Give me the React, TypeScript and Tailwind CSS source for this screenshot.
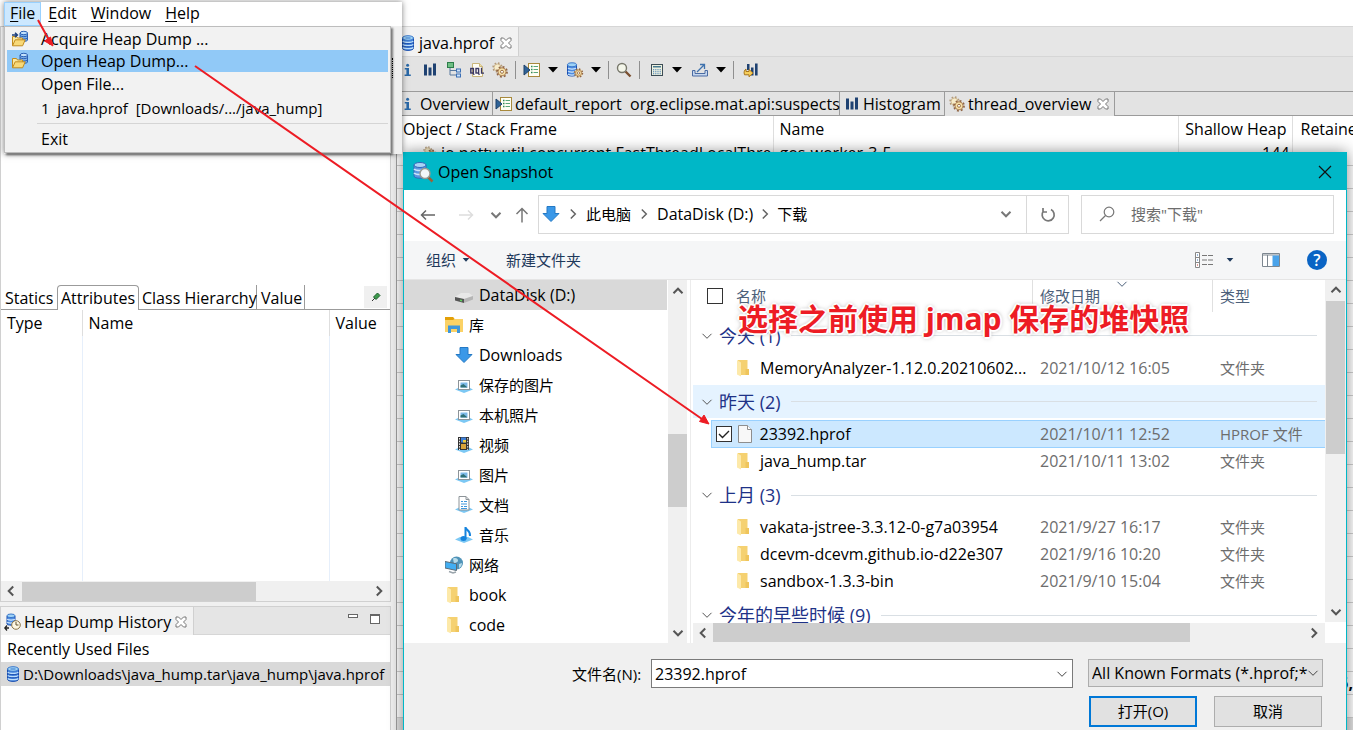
import * as React from "react";

type IconProps = { className?: string };

function Database({ className = "h-4 w-4" }: IconProps) {
  return (
    <svg viewBox="0 0 16 16" className={className} aria-hidden="true">
      <path d="M2.5 3v10.2c0 1.2 2.4 2.2 5.5 2.2s5.5-1 5.5-2.2V3z" fill="#3f7fdc" stroke="#1b4fb0" />
      <path d="M2.8 6.2c1 1.6 9.4 1.6 10.4 0M2.8 9.4c1 1.6 9.4 1.6 10.4 0M2.8 12.4c1 1.6 9.4 1.6 10.4 0" fill="none" stroke="#bfe0fb" strokeWidth="1.3" />
      <path d="M2.8 7.4c1 1.6 9.4 1.6 10.4 0M2.8 10.6c1 1.6 9.4 1.6 10.4 0" fill="none" stroke="#1747a8" strokeWidth="0.8" />
      <ellipse cx="8" cy="3" rx="5.5" ry="2.3" fill="#9fd2f5" stroke="#3a78cc" />
      <path d="M5.5 3h5" stroke="#3a78cc" />
    </svg>
  );
}

function HeapFolder({ arrow }: { arrow?: boolean }) {
  return (
    <svg viewBox="0 0 18 18" className="h-[18px] w-[18px]" aria-hidden="true">
      <path d="M9 3v7c0 1.8 7.5 1.8 7.5 0V3z" fill="#7fb2ea" stroke="#2b62b5" />
      <ellipse cx="12.8" cy="3" rx="3.7" ry="1.7" fill="#c3e2fb" stroke="#2b62b5" />
      <path d="M9 5.6c1 1.4 6.5 1.4 7.5 0M9 8c1 1.4 6.5 1.4 7.5 0" fill="none" stroke="#2b62b5" />
      <path d="M1.5 15.5V6.5h4l1 1.5h5v2" fill="#fbe9a0" stroke="#c28b1d" />
      <path d="M1.5 15.8l2.7-6h10l-2.6 6z" fill="#f8d978" stroke="#c28b1d" />
      {arrow && <path d="M1 5h5M4 2.8L6.4 5 4 7.2" fill="none" stroke="#1c3f7c" strokeWidth="1.5" />}
    </svg>
  );
}

function InfoLetter() {
  return (
    <svg viewBox="0 0 12 16" className="h-4 w-3 shrink-0" aria-hidden="true">
      <circle cx="5.6" cy="3.2" r="1.5" fill="#2a69a8" />
      <path d="M2.800 6h4.200v6.500h1.800V14H2.600v-1.500h1.800V7.500H2.800z" fill="#2a69a8" />
    </svg>
  );
}

function Bars() {
  return (
    <svg viewBox="0 0 14 16" className="h-4 w-3.5 shrink-0" aria-hidden="true">
      <path d="M1 2.5h3v11H1zM5.5 5.5h3v8h-3zM10 1.5h3v12h-3z" fill="#1f4272" />
    </svg>
  );
}

function TreeIcon() {
  return (
    <svg viewBox="0 0 16 16" className="h-4 w-4" aria-hidden="true">
      <path d="M4 6v7h6M4 8.500h6" fill="none" stroke="#58789e" />
      <rect x="1.500" y=".5" width="6" height="5" fill="#6fbf84" stroke="#2d7d4a" />
      <rect x="10.500" y="7" width="4" height="3" fill="#cde3fa" stroke="#3c70b5" />
      <rect x="10.500" y="12" width="4" height="3" fill="#cde3fa" stroke="#3c70b5" />
    </svg>
  );
}

function OqlIcon() {
  return (
    <svg viewBox="0 0 16 16" className="h-4 w-4" aria-hidden="true">
      <path d="M3.500 1.500h7l3 3v10h-10z" fill="#fffdf4" stroke="#c9b57a" />
      <path d="M10.500 1.500v3h3" fill="#eedfa8" stroke="#c9b57a" />
      <rect x="1.800" y="6.500" width="2.600" height="4.500" fill="none" stroke="#3a3763" strokeWidth="1.400" />
      <rect x="7" y="6.500" width="2.600" height="4.500" fill="none" stroke="#3a3763" strokeWidth="1.400" />
      <path d="M4 11l1.200 1.800M9.200 11l1.200 1.800M12.500 5.800v5.400H15" fill="none" stroke="#3a3763" strokeWidth="1.300" />
    </svg>
  );
}

function Gears({ className = "h-4 w-4" }: IconProps) {
  return (
    <svg viewBox="0 0 16 16" className={className} aria-hidden="true">
      <circle cx="5.500" cy="5.500" r="4.400" fill="none" stroke="#b39a7a" strokeWidth="1.600" strokeDasharray="1.600 1.850" />
      <circle cx="5.500" cy="5.500" r="3.500" fill="#f7ecca" stroke="#c3aa80" strokeWidth=".8" />
      <circle cx="10" cy="9.800" r="5" fill="none" stroke="#8f6444" strokeWidth="1.800" strokeDasharray="1.900 2.020" />
      <circle cx="10" cy="9.800" r="4" fill="#f6e0a8" stroke="#a87c4e" strokeWidth=".9" />
      <circle cx="10" cy="9.800" r="1.500" fill="#fff" stroke="#94653a" strokeWidth=".9" />
    </svg>
  );
}

function ReportIcon() {
  return (
    <svg viewBox="0 0 18 16" className="h-4 w-[18px] shrink-0" aria-hidden="true">
      <rect x="5.500" y="1.500" width="11" height="13" fill="#fffef4" stroke="#a8893c" />
      <path d="M8 4.500h1.500M8 7.500h1.500M8 10.500h1.500" stroke="#2f8a57" strokeWidth="1.400" />
      <path d="M10.500 4.500H15M10.500 7.500H15M10.500 10.500H15" stroke="#5aa678" />
      <path d="M1 3l6 5-6 5z" fill="#2f6398" stroke="#1e4168" />
    </svg>
  );
}

function DatabaseGear() {
  return (
    <svg viewBox="0 0 18 16" className="h-4 w-[18px]" aria-hidden="true">
      <path d="M1.500 3v9.500c0 2 9 2 9 0V3z" fill="#4e8be0" stroke="#1b4fb0" />
      <path d="M2 6c1 1.400 7 1.400 8 0M2 9c1 1.400 7 1.400 8 0M2 12c1 1.400 7 1.400 8 0" fill="none" stroke="#d3eafd" strokeWidth="1.200" />
      <ellipse cx="6" cy="2.800" rx="4.500" ry="2" fill="#9fd2f5" stroke="#3a78cc" />
      <circle cx="12.500" cy="11" r="3.900" fill="#f6e0a8" stroke="#8f6444" strokeWidth="1.600" strokeDasharray="1.500 1.560" />
      <circle cx="12.500" cy="11" r="3" fill="#f6e0a8" stroke="#a87c4e" strokeWidth=".8" />
      <circle cx="12.500" cy="11" r="1.200" fill="#fff" stroke="#94653a" strokeWidth=".8" />
    </svg>
  );
}

function Magnifier() {
  return (
    <svg viewBox="0 0 16 16" className="h-4 w-4" aria-hidden="true">
      <path d="M9.500 9.500l5 5" stroke="#7b5030" strokeWidth="2.400" />
      <circle cx="6" cy="6" r="4.500" fill="#f4f6ea" stroke="#77776b" strokeWidth="1.400" />
    </svg>
  );
}

function Calculator() {
  return (
    <svg viewBox="0 0 16 16" className="h-4 w-4" aria-hidden="true">
      <rect x="2.500" y="2.500" width="11" height="11" fill="#eef1e0" stroke="#3c4d56" />
      <rect x="4" y="4" width="8" height="1.500" fill="#4a7d92" />
      <path d="M4 7.700h8M4 9.700h8M4 11.700h8" stroke="#3d79b3" strokeWidth="1.100" strokeDasharray="1.200 1" />
    </svg>
  );
}

function ExportIcon() {
  return (
    <svg viewBox="0 0 18 16" className="h-4 w-[18px]" aria-hidden="true">
      <path d="M4 8.500H1.500v5.500h15V8.500H14v3H4z" fill="#c7d8ef" stroke="#4a6ba3" />
      <path d="M6 10l7-7M9 2.500h4.500V7" fill="none" stroke="#3f72ad" strokeWidth="1.300" />
    </svg>
  );
}

function BarsArrow() {
  return (
    <svg viewBox="0 0 16 16" className="h-4 w-4" aria-hidden="true">
      <path d="M4 2h2.500v6H4zM8 5.500h2.500v8H8zM12 1.500h2.600v12H12z" fill="#1f4272" />
      <path d="M3 7v2.500H6v-2L10 11l-4 3.800v-2H1.500C.5 10 1.500 8 3 7z" fill="#f7cf5c" stroke="#a9761b" />
    </svg>
  );
}

function TabClose() {
  return (
    <svg viewBox="0 0 12 12" className="h-3 w-3 shrink-0" aria-hidden="true">
      <path d="M1 1h2.500L6 3.500 8.500 1H11v2.500L8.500 6 11 8.500V11H8.500L6 8.500 3.500 11H1V8.500L3.500 6 1 3.500z" fill="#fff" stroke="#777" />
    </svg>
  );
}

function Caret({ className = "h-1.5 w-2.5 text-black" }: IconProps) {
  return (
    <svg viewBox="0 0 10 6" className={`shrink-0 ${className}`} aria-hidden="true">
      <path d="M0 0h10L5 5.500z" fill="currentColor" />
    </svg>
  );
}

const turns = { down: "", up: "rotate-180", left: "rotate-90", right: "-rotate-90" };

function Chevron({ to, className = "", width = 2 }: { to: keyof typeof turns; className?: string; width?: number }) {
  return (
    <svg viewBox="0 0 12 12" className={`h-3 w-3 shrink-0 ${turns[to]} ${className}`} aria-hidden="true">
      <path d="M1.500 3.800L6 8.300l4.500-4.500" fill="none" stroke="currentColor" strokeWidth={width} />
    </svg>
  );
}

function BlueArrow() {
  return (
    <svg viewBox="0 0 18 18" className="h-[18px] w-[18px] shrink-0" aria-hidden="true">
      <path d="M5 1.500h8v7h4l-8 8-8-8h4z" fill="#3a98e8" stroke="#2479c4" />
    </svg>
  );
}

function Drive() {
  return (
    <svg viewBox="0 0 18 18" className="h-[18px] w-[18px]" aria-hidden="true">
      <path d="M0 11l6-4h8l4 3-9 3z" fill="#e8e8e8" />
      <path d="M0 11l9 2v4l-9-2.500z" fill="#555" />
      <path d="M9 13l9-3v3.500L9 17z" fill="#b5b5b5" />
      <path d="M5 14.200l2 .5" stroke="#5fd25f" strokeWidth="1.500" />
    </svg>
  );
}

function Library() {
  return (
    <svg viewBox="0 0 18 18" className="h-[18px] w-[18px]" aria-hidden="true">
      <path d="M0 1h8l1.500 2H18v13H0z" fill="#fbd266" />
      <path d="M0 1h8l1.500 2L8 4H0z" fill="#e3a008" />
      <path d="M3 17V9.500h12V17h-3v-4H6v4z" fill="#3f97dc" />
    </svg>
  );
}

function Tray() {
  return <path d="M0 13.500l5-2.500h8l5 2.500L9 17z" fill="#7cc8f4" />;
}

function Pictures() {
  return (
    <svg viewBox="0 0 18 18" className="h-[18px] w-[18px]" aria-hidden="true">
      <Tray />
      <rect x="3.500" y="4.500" width="11" height="9" fill="#fff" stroke="#8d9499" />
      <path d="M5.500 6.500h7v5h-7z" fill="#7db8e8" />
      <path d="M5.500 11.500v-2l3-1.500 4 3.500z" fill="#2f6f74" />
    </svg>
  );
}

function Film() {
  return (
    <svg viewBox="0 0 18 18" className="h-[18px] w-[18px]" aria-hidden="true">
      <Tray />
      <path d="M3 1h11v13H3z" fill="#333" />
      <path d="M6 1.500h5v5H6z" fill="#3f80d8" />
      <path d="M6 8h5v5H6z" fill="#d8a43b" />
      <path d="M8 4h3v2.500H8z" fill="#f0cf3d" />
      <path d="M4.500 2v12M12.700 2v12" stroke="#eee" strokeDasharray="1.500 1.200" />
    </svg>
  );
}

function Documents() {
  return (
    <svg viewBox="0 0 18 18" className="h-[18px] w-[18px]" aria-hidden="true">
      <Tray />
      <path d="M4 .5h7l3 3V14H4z" fill="#fff" stroke="#8d9499" />
      <path d="M11 .5v3h3" fill="none" stroke="#8d9499" />
      <path d="M6 5.500h2M9 5.500h3M6 8h6M6 10.500h2M9 10.500h3M6 12.500h6" stroke="#3f97dc" />
    </svg>
  );
}

function Music() {
  return (
    <svg viewBox="0 0 18 18" className="h-[18px] w-[18px]" aria-hidden="true">
      <Tray />
      <ellipse cx="8.500" cy="12.500" rx="3" ry="2.500" fill="#1583dd" />
      <path d="M10.500 13V1c0 3 5 3 4.500 9" fill="none" stroke="#1583dd" strokeWidth="2" />
    </svg>
  );
}

function Network() {
  return (
    <svg viewBox="0 0 18 18" className="h-[18px] w-[18px]" aria-hidden="true">
      <circle cx="11.500" cy="7" r="6.500" fill="#4f93b8" />
      <path d="M8 2.500c3-1 5 0 5 2s-3 2-4 3.500zM14 8l3-1c0 3-2 4.500-3 5z" fill="#b8dcea" />
      <path d="M0 5.500l11.500 2.300v6.700L0 12z" fill="#42aef2" stroke="#5c6a74" />
      <path d="M4 15.500l4 1.500 3-1" fill="none" stroke="#9aa4ab" strokeWidth="1.500" />
    </svg>
  );
}

function Folder() {
  return (
    <svg viewBox="0 0 18 18" className="h-[18px] w-[18px] shrink-0" aria-hidden="true">
      <path d="M3 1h9.500v15H3z" fill="#f5d171" />
      <path d="M10.500 10h3.500v6h-3.500z" fill="#efc55c" />
      <path d="M2 1l4 2.500v14L2 15.500z" fill="#fde9a9" />
    </svg>
  );
}

function BlankFile() {
  return (
    <svg viewBox="0 0 16 20" className="h-5 w-4 shrink-0" aria-hidden="true">
      <path d="M1.500 1.500h9l4 4v13h-13z" fill="#f8f8f8" stroke="#8e8e8e" />
      <path d="M10.500 1.500v4h4" fill="#fff" stroke="#8e8e8e" />
    </svg>
  );
}

const menuItems = [
  { label: "Acquire Heap Dump ...", icon: <HeapFolder arrow />, style: "h-[22px]" },
  { label: "Open Heap Dump...", icon: <HeapFolder />, style: "h-[22px] bg-[#91c9f7]" },
  { label: "Open File...", icon: null, style: "h-6" },
  { label: "1  java.hprof  [Downloads/.../java_hump]", icon: null, style: "h-6 text-[15px]" },
];

function FileMenu() {
  return (
    <div className="absolute left-1 top-0.5 z-30 w-[398px] bg-[#f0f0f0] pb-px shadow-[0_0_6px_rgba(0,0,0,0.5)]">
      <nav className="flex h-6 items-center bg-white">
        {["File", "Edit", "Window", "Help"].map((name) => (
          <button
            key={name}
            className={`h-full pb-0.5 ${name === "File" ? "border border-[#99d1ff] bg-[#cce8ff] px-[5px]" : "px-[7px]"}`}
          >
            <span className="underline underline-offset-2">{name[0]}</span>
            {name.slice(1)}
          </button>
        ))}
      </nav>
      <div className="flex">
        <div className="w-[387px] border border-[#bdbdbd] bg-[#f2f2f2] px-0.5 py-px shadow-[2px_2px_2px_rgba(0,0,0,0.5)]">
          {menuItems.map((item) => (
            <button key={item.label} className={`flex w-full items-center whitespace-pre text-left ${item.style}`}>
              <span className="flex w-[34px] pl-1">{item.icon}</span>
              {item.label}
            </button>
          ))}
          <hr className="my-[3px] ml-[30px] border-[#d5d5d5]" />
          <button className="flex h-6 w-full items-center pl-[34px]">Exit</button>
        </div>
        <div className="ml-px mt-8 h-5 border-l border-dotted border-black" />
      </div>
    </div>
  );
}

function Inspector() {
  return (
    <section className="flex min-h-0 flex-1 flex-col border border-[#d0d0d0] bg-white">
      <div className="h-[259px] shrink-0" />
      <div className="flex h-6 shrink-0 items-end whitespace-nowrap border-b border-[#9b9b9b]">
        <button className="h-6 w-14 pl-1 pt-0.5 text-left">Statics</button>
        <button className="-mb-px h-[25px] w-[82px] rounded-t border border-b-0 border-[#9b9b9b] bg-white">Attributes</button>
        <button className="h-6 w-[118px] border-r border-[#9b9b9b] pl-[3px] pt-0.5 text-left">Class Hierarchy</button>
        <button className="h-6 w-12 border-r border-[#9b9b9b] pl-1 pt-0.5 text-left">Value</button>
        <button className="mb-px ml-auto mr-[3px] flex h-[22px] w-[23px] items-center justify-center bg-[#f0f0f0]" aria-label="Pin">
          <svg viewBox="0 0 10 10" className="h-2.5 w-2.5" aria-hidden="true">
            <path d="M1 9l3-3" stroke="#333" />
            <path d="M2.500 5l4-4L9 3.500 5 7.500z" fill="#3c9a4c" stroke="#1c5e2b" />
          </svg>
        </button>
      </div>
      <table className="w-full flex-1 table-fixed text-left">
        <thead>
          <tr className="h-[26px]">
            <th className="w-[81px] border-r border-[#dedede] pl-1.5 font-normal">Type</th>
            <th className="border-r border-[#dedede] pl-1.5 font-normal">Name</th>
            <th className="w-[61px] pl-1.5 font-normal">Value</th>
          </tr>
        </thead>
        <tbody>
          <tr>
            <td className="border-r border-[#e6effb]" />
            <td className="border-r border-[#e6effb]" />
            <td />
          </tr>
        </tbody>
      </table>
      <div className="flex h-5 shrink-0 items-center bg-[#f0f0f0] text-[#555]">
        <Chevron to="left" className="ml-1 mr-[5px]" />
        <div className="h-[19px] w-[234px] bg-[#cdcdcd]" />
        <Chevron to="right" className="ml-auto mr-[5px]" />
      </div>
    </section>
  );
}

function History() {
  return (
    <section className="mt-1 h-[124px] shrink-0 overflow-hidden border border-b-0 border-[#d0d0d0] bg-white">
      <div className="flex h-7 border-b border-[#d6d6d6] bg-[#e5e5e5]">
        <div className="-mb-px flex w-[193px] items-center gap-1 border-r border-[#d0d0d0] bg-[#f2f2f2] pl-[3px] pt-0.5">
          <span className="flex items-center">
            <svg viewBox="0 0 18 18" className="mr-0.5 h-[18px] w-[18px]" aria-hidden="true">
              <path d="M3 3v8c0 1.500 8 1.500 8 0V3z" fill="#4e8be0" stroke="#1b4fb0" />
              <path d="M3 6c1 1.400 7 1.400 8 0M3 9c1 1.400 7 1.400 8 0" fill="none" stroke="#d3eafd" strokeWidth="1.200" />
              <ellipse cx="7" cy="2.800" rx="4" ry="1.800" fill="#9fd2f5" stroke="#3a78cc" />
              <path d="M5 15H1M3 12.500L.8 15 3 17.500" fill="none" stroke="#222" strokeWidth="1.300" />
              <circle cx="12" cy="12" r="4.300" fill="#fdf7e3" stroke="#8a7548" />
              <path d="M12 9v3h2.500" fill="none" stroke="#5f4f2a" />
            </svg>
            Heap Dump History
          </span>
          <TabClose />
        </div>
        <div className="ml-auto flex gap-3 pr-2.5 pt-[7px]">
          <button className="h-1 w-2.5 border border-[#666] bg-white" aria-label="Minimize" />
          <button className="h-2.5 w-2.5 border border-t-2 border-[#666] bg-white" aria-label="Maximize" />
        </div>
      </div>
      <h2 className="flex h-[27px] items-center pl-1.5">Recently Used Files</h2>
      <a href="#" className="flex h-6 items-center whitespace-nowrap bg-[#d9d9d9] pl-1 text-[15px]">
        <Database className="mr-0.5 h-4 w-4 shrink-0" />
        D:\Downloads\java_hump.tar\java_hump\java.hprof
      </a>
    </section>
  );
}

function ToolSeparator() {
  return <div className="mx-[7px] h-[18px] w-px bg-[#8f8f8f]" />;
}

function Editor() {
  return (
    <main className="flex min-w-0 flex-1 flex-col border-l border-[#a0a0a0] bg-[#e3e3e3]">
      <div className="flex h-[31px] shrink-0 border-y border-[#d6d6d6] bg-[#e6e6e6]">
        <div className="flex w-[122px] items-center gap-1.5 border-r border-[#d0d0d0] bg-[#f2f2f2] pl-[3px] pt-0.5">
          <span className="flex items-center gap-[3px]">
            <Database />
            java.hprof
          </span>
          <TabClose />
        </div>
      </div>
      <div className="flex h-[34px] shrink-0 items-center pb-2 pl-[5px]">
        <button aria-label="Overview"><InfoLetter /></button>
        <button className="ml-[9px]" aria-label="Histogram"><Bars /></button>
        <button className="ml-[9px]" aria-label="Dominator tree"><TreeIcon /></button>
        <button className="ml-[7px]" aria-label="Query"><OqlIcon /></button>
        <button className="ml-[7px]" aria-label="Threads"><Gears /></button>
        <ToolSeparator />
        <button className="flex items-center gap-[7px]" aria-label="Reports"><ReportIcon /><Caret /></button>
        <button className="ml-2 flex items-center gap-[7px]" aria-label="Queries"><DatabaseGear /><Caret /></button>
        <ToolSeparator />
        <button aria-label="Search"><Magnifier /></button>
        <ToolSeparator />
        <button className="ml-0.5 flex items-center gap-[7px]" aria-label="Calculate"><Calculator /><Caret /></button>
        <button className="ml-[9px] flex items-center gap-[7px]" aria-label="Export"><ExportIcon /><Caret /></button>
        <ToolSeparator />
        <button className="ml-0.5" aria-label="Compare"><BarsArrow /></button>
      </div>
      <div className="flex h-[25px] shrink-0 whitespace-nowrap border-y border-[#9b9b9b]">
        <button className="flex w-24 items-center gap-1.5 border-r border-[#9b9b9b] pl-[5px]"><InfoLetter />Overview</button>
        <button className="flex w-[347px] items-center gap-0.5 whitespace-pre border-r border-[#9b9b9b] pl-0.5">
          <ReportIcon />default_report  org.eclipse.mat.api:suspects
        </button>
        <button className="flex w-[105px] items-center gap-1 border-r border-[#9b9b9b] pl-[5px]"><Bars />Histogram</button>
        <button className="-mb-px flex h-6 w-[170px] items-center gap-[3px] border-r border-[#9b9b9b] bg-[#e3e3e3] pl-1">
          <Gears />
          <span className="mr-[3px]">thread_overview</span>
          <TabClose />
        </button>
      </div>
      <table className="w-full table-fixed whitespace-nowrap bg-white text-left">
        <thead>
          <tr className="h-[26px]">
            <th className="w-[376px] border-r border-[#dedede] pl-1.5 font-normal">Object / Stack Frame</th>
            <th className="border-r border-[#dedede] pl-1.5 font-normal">Name</th>
            <th className="w-[114px] border-r border-[#dedede] pr-[5px] text-right font-normal">Shallow Heap</th>
            <th className="w-[61px] overflow-hidden pl-2 font-normal">Retained Heap</th>
          </tr>
        </thead>
        <tbody>
          <tr className="h-[23px] border-b border-[#cfcfcf]">
            <td className="overflow-hidden border-r border-[#e4e4e4]">
              <span className="flex h-[22px] items-center gap-1 pl-[26px]">
                <Gears className="h-3.5 w-3.5 shrink-0" />
                io.netty.util.concurrent.FastThreadLocalThread
              </span>
            </td>
            <td className="border-r border-[#e4e4e4] pl-1.5">gos-worker-3-5</td>
            <td className="border-r border-[#e4e4e4] pr-0.5 text-right">144</td>
            <td />
          </tr>
          {Array.from({ length: 26 }, (_, i) => (
            <tr key={i} className={`h-[23px] border-b border-[#cfcfcf] ${i > 23 ? "bg-[#e2e2e2]" : ""}`}>
              <td />
              <td />
              <td />
              <td className="p-0 text-right font-bold leading-none">{i === 22 ? "5," : ""}</td>
            </tr>
          ))}
        </tbody>
      </table>
    </main>
  );
}

const places = [
  { name: "DataDisk (D:)", icon: <Drive />, style: "bg-[#d9d9d9] pl-[51px]" },
  { name: "库", icon: <Library />, style: "pl-[41px] text-[15px]" },
  { name: "Downloads", icon: <BlueArrow />, style: "pl-[51px]" },
  { name: "保存的图片", icon: <Pictures />, style: "pl-[51px] text-[15px]" },
  { name: "本机照片", icon: <Pictures />, style: "pl-[51px] text-[15px]" },
  { name: "视频", icon: <Film />, style: "pl-[51px] text-[15px]" },
  { name: "图片", icon: <Pictures />, style: "pl-[51px] text-[15px]" },
  { name: "文档", icon: <Documents />, style: "pl-[51px] text-[15px]" },
  { name: "音乐", icon: <Music />, style: "pl-[51px] text-[15px]" },
  { name: "网络", icon: <Network />, style: "pl-[41px] text-[15px]" },
  { name: "book", icon: <Folder />, style: "pl-[41px]" },
  { name: "code", icon: <Folder />, style: "pl-[41px]" },
];

const groups = [
  {
    label: "今天 (1)",
    files: [{ name: "MemoryAnalyzer-1.12.0.20210602...", date: "2021/10/12 16:05", type: "文件夹" }],
  },
  {
    label: "昨天 (2)",
    active: true,
    files: [
      { name: "23392.hprof", date: "2021/10/11 12:52", type: "HPROF 文件", selected: true },
      { name: "java_hump.tar", date: "2021/10/11 13:02", type: "文件夹" },
    ],
  },
  {
    label: "上月 (3)",
    files: [
      { name: "vakata-jstree-3.3.12-0-g7a03954", date: "2021/9/27 16:17", type: "文件夹" },
      { name: "dcevm-dcevm.github.io-d22e307", date: "2021/9/16 10:20", type: "文件夹" },
      { name: "sandbox-1.3.3-bin", date: "2021/9/10 15:04", type: "文件夹" },
    ],
  },
  { label: "今年的早些时候 (9)", files: [] },
];

function FileRow({ file }: { file: { name: string; date: string; type: string; selected?: boolean } }) {
  const cell = file.selected ? "border-y border-[#99d1ff] bg-[#cce8ff]" : "";
  return (
    <tr className="h-[27px] text-[#6d6d6d]">
      <td className="p-0" />
      <td className={`p-0 text-black ${cell} ${file.selected ? "border-l" : ""}`}>
        <span className="flex h-[25px] items-center">
          {file.selected ? (
            <>
              <input
                type="checkbox"
                defaultChecked
                aria-label={file.name}
                className="ml-1 h-4 w-4 appearance-none border border-[#333] bg-white"
              />
              <svg viewBox="0 0 16 16" className="pointer-events-none -ml-4 h-4 w-4" aria-hidden="true">
                <path d="M3 8l3.500 3.500L13 5" fill="none" stroke="#222" strokeWidth="1.400" />
              </svg>
              <span className="ml-[5px] mr-[7px] flex"><BlankFile /></span>
            </>
          ) : (
            <span className="ml-6 mr-[7px] flex"><Folder /></span>
          )}
          {file.name}
        </span>
      </td>
      <td className={`p-0 pl-2 ${cell}`}>{file.date}</td>
      <td className={`p-0 pl-2 text-[15px] ${cell}`}>{file.type}</td>
    </tr>
  );
}

function FileList() {
  return (
    <div className="flex min-w-0 flex-1 pl-0.5">
      <div className="min-w-0 flex-1">
        <div className="h-[343px] overflow-hidden">
          <table className="w-full table-fixed whitespace-nowrap text-left">
            <colgroup>
              <col className="w-[18px]" />
              <col />
              <col className="w-[180px]" />
              <col className="w-[113px]" />
            </colgroup>
            <thead className="text-[15px] text-[#4c607a]">
              <tr>
                <th colSpan={2} className="p-0 pb-[3px] font-normal">
                  <label className="flex h-8 items-center gap-[13px] pl-3.5">
                    <input type="checkbox" className="h-4 w-4 appearance-none border border-[#333] bg-white" />
                    名称
                  </label>
                </th>
                <th className="relative p-0 pb-[3px] font-normal">
                  <div className="flex h-8 items-center border-l border-[#e0e0e0] pl-[7px]">修改日期</div>
                  <Chevron to="down" width={1} className="absolute left-[84px] top-0 -mt-0.5" />
                </th>
                <th className="p-0 pb-[3px] font-normal">
                  <div className="flex h-8 items-center border-l border-[#e0e0e0] pl-[7px]">类型</div>
                </th>
              </tr>
            </thead>
            {groups.map((group) => (
              <tbody key={group.label}>
                <tr>
                  <th colSpan={4} className="p-0 pb-0.5 pt-1 font-normal">
                    <div
                      className={`flex h-[33px] items-center px-2 text-lg text-[#1e3287] ${group.active ? "bg-[#e5f3ff]" : ""}`}
                    >
                      <Chevron to="down" width={1} className="mr-1.5 text-[#555]" />
                      {group.label}
                      <span className="ml-2.5 h-px flex-1 bg-[#d9dfe4]" />
                    </div>
                  </th>
                </tr>
                {group.files.map((file) => (
                  <FileRow key={file.name} file={file} />
                ))}
              </tbody>
            ))}
          </table>
        </div>
        <div className="flex h-5 items-center bg-[#f0f0f0] pb-px text-[#555]">
          <Chevron to="left" className="mx-1" />
          <div className="h-[19px] w-[477px] bg-[#cdcdcd]" />
          <Chevron to="right" className="ml-auto mr-[5px]" />
        </div>
      </div>
      <div className="mb-[21px] flex w-[21px] flex-col items-center bg-[#f0f0f0] text-[#555]">
        <Chevron to="up" className="mb-[5px] mt-1" />
        <div className="h-[153px] w-[19px] bg-[#cdcdcd]" />
        <Chevron to="down" className="mb-1 mt-auto" />
      </div>
    </div>
  );
}

function OpenDialog() {
  return (
    <div
      role="dialog"
      aria-label="Open Snapshot"
      className="absolute left-[403px] right-1.5 top-[152px] z-10 h-[600px] border border-[#00b7c7] bg-[#f0f0f0] shadow-[0_0_14px_rgba(0,0,0,0.45)]"
    >
      <header className="flex h-[37px] items-center bg-[#00b7c7] pl-2">
        <svg viewBox="0 0 22 22" className="mr-1 h-[22px] w-[22px]" aria-hidden="true">
          <path d="M2 4v11c0 3 12 3 12 0V4z" fill="#5c97e0" stroke="#3468b8" />
          <path d="M2 8c2 2 10 2 12 0M2 12c2 2 10 2 12 0" fill="none" stroke="#cbe6fa" strokeWidth="1.600" />
          <ellipse cx="8" cy="4" rx="6" ry="2.500" fill="#a9d4f5" stroke="#3468b8" />
          <path d="M16 16l4.500 4.500" stroke="#9a6238" strokeWidth="2.500" />
          <circle cx="13" cy="12.500" r="5" fill="#f3f8f8" stroke="#9a9a90" strokeWidth="1.400" />
        </svg>
        Open Snapshot
        <button className="ml-auto mr-3.5" aria-label="Close">
          <svg viewBox="0 0 14 14" className="h-3.5 w-3.5" aria-hidden="true">
            <path d="M1 1l12 12M13 1L1 13" stroke="#111" strokeWidth="1.200" />
          </svg>
        </button>
      </header>
      <div className="flex h-[51px] items-center bg-white pb-0.5 pr-3 text-[#777]">
        <button className="ml-4" aria-label="Back">
          <svg viewBox="0 0 16 12" className="h-3 w-4" aria-hidden="true">
            <path d="M15 6H1.500M6 1.500L1.500 6 6 10.500" fill="none" stroke="#666" strokeWidth="1.500" />
          </svg>
        </button>
        <button className="ml-[22px]" aria-label="Forward">
          <svg viewBox="0 0 16 12" className="h-3 w-4" aria-hidden="true">
            <path d="M1 6h13.500M10 1.500L14.500 6 10 10.500" fill="none" stroke="#ddd" strokeWidth="1.500" />
          </svg>
        </button>
        <button className="ml-4" aria-label="Recent"><Chevron to="down" className="h-2.5 w-2.5" /></button>
        <button className="ml-[13px]" aria-label="Up">
          <svg viewBox="0 0 14 16" className="h-4 w-3.5" aria-hidden="true">
            <path d="M7 15.500V1.500M1.500 7L7 1.500 12.500 7" fill="none" stroke="#777" strokeWidth="1.500" />
          </svg>
        </button>
        <div className="ml-[9px] flex h-[39px] flex-1 items-center border border-[#d9d9d9] pb-0.5 pl-[3px] text-[15px] text-black">
          <BlueArrow />
          <Chevron to="right" width={1.5} className="mx-[7px] text-[#666]" />
          <a href="#">此电脑</a>
          <Chevron to="right" width={1.5} className="mx-[7px] text-[#666]" />
          <a href="#" className="text-base">DataDisk (D:)</a>
          <Chevron to="right" width={1.5} className="mx-1.5 text-[#666]" />
          <a href="#">下载</a>
          <button className="ml-auto mr-3.5" aria-label="Show history"><Chevron to="down" className="text-[#777]" /></button>
          <button className="-mb-0.5 flex h-[37px] w-[42px] items-center justify-center border-l border-[#d9d9d9]" aria-label="Refresh">
            <svg viewBox="0 0 16 16" className="h-4 w-4" aria-hidden="true">
              <path d="M3.500 4A6 6 0 1 0 11 2.500M3 1v4h4" fill="none" stroke="#777" strokeWidth="1.700" />
            </svg>
          </button>
        </div>
        <label className="ml-3 flex h-[39px] w-[253px] items-center border border-[#d9d9d9] pb-0.5 pl-[17px]">
          <svg viewBox="0 0 16 16" className="h-4 w-4 shrink-0" aria-hidden="true">
            <circle cx="10" cy="6" r="4.800" fill="none" stroke="#777" strokeWidth="1.200" />
            <path d="M6.500 9.500L1 15" stroke="#777" strokeWidth="1.200" />
          </svg>
          <input className="ml-4 w-40 text-[15px] outline-none placeholder:text-[#6d6d6d]" placeholder={'搜索"下载"'} aria-label="搜索" />
        </label>
      </div>
      <div className="flex h-[39px] items-center border-b border-[#e5e5e5] bg-[#f5f6f7] pl-[22px] pr-[19px] text-[15px] text-[#1e395b]">
        <button className="flex items-center gap-1.5">组织 <Caret className="h-1 w-2 text-[#1e395b]" /></button>
        <button className="ml-9">新建文件夹</button>
        <button className="ml-auto flex items-center gap-3" aria-label="View">
          <svg viewBox="0 0 20 16" className="h-4 w-5" aria-hidden="true">
            <path d="M1.500.5h4v15h-4zM1.500 5.500h4M1.500 10.500h4" fill="#fff" stroke="#888" />
            <path d="M8 3.500h5M14 3.500h5M8 8h5M14 8h5M8 12.500h5M14 12.500h5" stroke="#777" />
            <path d="M3 3h1M3 8h1" stroke="#2c6fb5" />
            <path d="M3 13h1" stroke="#c0392b" />
          </svg>
          <Caret className="h-1 w-2 text-[#1e395b]" />
        </button>
        <button className="ml-7" aria-label="Preview pane">
          <svg viewBox="0 0 18 14" className="h-3.5 w-[18px]" aria-hidden="true">
            <path d="M.5.5h17v13H.5z" fill="#fff" stroke="#7d8790" />
            <path d="M1 2h16M5.500 2v11" stroke="#7d8790" />
            <path d="M10.500 2.500H17V13h-6.500z" fill="#4aa3ea" />
          </svg>
        </button>
        <button
          className="ml-[27px] flex h-5 w-5 items-center justify-center rounded-full bg-[#0a64c4] text-base font-semibold leading-none text-white"
          aria-label="Help"
        >
          ?
        </button>
      </div>
      <div className="flex h-[363px] bg-white">
        <ul className="w-[264px] pr-px">
          {places.map((place) => (
            <li key={place.name}>
              <a href="#" className={`flex h-[30px] items-center gap-1.5 ${place.style}`}>
                {place.icon}
                {place.name}
              </a>
            </li>
          ))}
        </ul>
        <div className="flex w-[19px] flex-col items-center bg-[#f0f0f0] text-[#555]">
          <Chevron to="up" className="mt-[5px]" />
          <div className="mt-[137px] h-[73px] w-full bg-[#cdcdcd]" />
          <Chevron to="down" className="mb-1 mt-auto" />
        </div>
        <div className="ml-[3px] w-px shrink-0 bg-[#ececec]" />
        <FileList />
      </div>
      <div className="flex pl-[168px] pr-[23px] pt-4">
        <label htmlFor="file-name" className="flex h-[29px] w-[79px] shrink-0 items-center text-[15px]">文件名(N):</label>
        <div className="flex h-[29px] flex-1 items-center border border-[#7a7a7a] bg-white pr-1">
          <input id="file-name" defaultValue="23392.hprof" className="min-w-0 flex-1 pl-[3px] outline-none" />
          <Chevron to="down" width={1} className="text-[#444]" />
        </div>
        <div className="relative ml-[15px] w-[235px]">
          <select aria-label="Format" className="h-7 w-full appearance-none border border-[#adadad] bg-[#e1e1e1] pl-[3px] pr-3">
            <option>All Known Formats (*.hprof;*</option>
          </select>
          <Chevron to="down" width={1} className="pointer-events-none absolute right-1 top-2 text-[#444]" />
        </div>
      </div>
      <div className="mt-2 flex justify-end gap-[17px] pr-6 text-[15px]">
        <button className="h-[31px] w-[108px] border-2 border-[#0078d7] bg-[#e1e1e1] pb-0.5">打开(O)</button>
        <button className="h-[31px] w-[108px] border border-[#adadad] bg-[#e1e1e1] pb-0.5">取消</button>
      </div>
    </div>
  );
}

// red arrows and the caption drawn over the windows
function Annotations() {
  return (
    <div className="pointer-events-none absolute inset-0 z-40 overflow-hidden">
      <svg viewBox="0 0 730 440" className="h-[440px] w-[730px]" aria-hidden="true">
        <path d="M38 20l11 20M195 66l507 353" stroke="#ed1c24" strokeWidth="2" />
        <path d="M53 46l-8.500-5 6-4zM709 424l-9.500-2.500 4.500-6.500z" fill="#ed1c24" stroke="#ed1c24" />
      </svg>
      <p className="absolute left-[738px] top-[297px] whitespace-nowrap text-[30px] font-bold leading-[44px] text-[#ed1c24] [text-shadow:0_0_2px_#fff,2px_0_1px_#fff,-2px_0_1px_#fff,0_2px_1px_#fff,0_-2px_1px_#fff,1px_1px_1px_#fff,-1px_-1px_1px_#fff,0_0_5px_#777]">
        选择之前使用 jmap 保存的堆快照
      </p>
    </div>
  );
}

export default function App() {
  return (
    <div className="relative flex h-screen flex-col overflow-hidden bg-[#f0f0f0] font-['Open_Sans','Noto_Sans_CJK_SC',sans-serif] text-base leading-5 text-black">
      <div className="h-[26px] shrink-0 bg-white" />
      <div className="flex min-h-0 flex-1">
        <aside className="mr-[5px] flex w-[391px] shrink-0 flex-col">
          <Inspector />
          <History />
        </aside>
        <Editor />
      </div>
      <FileMenu />
      <OpenDialog />
      <Annotations />
    </div>
  );
}
